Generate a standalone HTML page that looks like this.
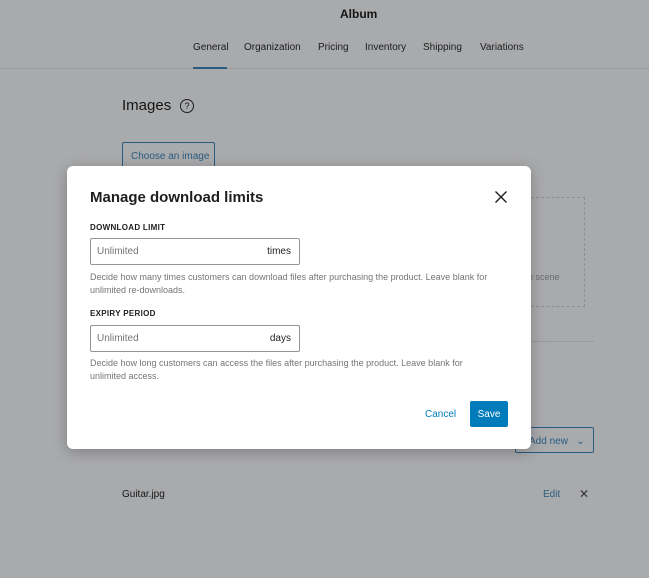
<!DOCTYPE html>
<html><head><style>
*{box-sizing:border-box;margin:0;padding:0}
body{width:649px;height:578px;overflow:hidden;background:#a9aaac;font-family:"Liberation Sans",sans-serif;position:relative;color:#151515}
.a{position:absolute;white-space:nowrap}
.tab{font-size:10px;top:42px;color:#1c1c1c}
.modal{position:absolute;left:67px;top:166px;width:464px;height:283px;background:#fff;border-radius:6px;box-shadow:0 3px 14px rgba(0,0,0,.25)}
.lab{font-size:8px;font-weight:bold;letter-spacing:.3px;color:#1e1e1e}
.inp{position:absolute;width:210px;height:27px;border:1px solid #949494;border-radius:2px;font-size:10px}
.inp .p{position:absolute;left:6px;top:7px;color:#757575}
.inp .s{position:absolute;right:8px;top:7px;color:#1e1e1e}
.help{font-size:9px;color:#757575;line-height:13px;white-space:normal;width:420px}
</style></head><body>
<div class="a" style="left:340px;top:7px;font-size:12px;font-weight:bold">Album</div>
<div class="a tab" style="left:193px">General</div>
<div class="a tab" style="left:244px">Organization</div>
<div class="a tab" style="left:318px">Pricing</div>
<div class="a tab" style="left:365px">Inventory</div>
<div class="a tab" style="left:423px">Shipping</div>
<div class="a tab" style="left:480px">Variations</div>
<div class="a" style="left:0;top:68px;width:649px;height:1px;background:#999a9c"></div>
<div class="a" style="left:193px;top:67px;width:34px;height:2px;background:#2a5c82"></div>
<div class="a" style="left:122px;top:97px;font-size:15px">Images</div>
<div class="a" style="left:180px;top:99px;width:14px;height:14px;border:1.3px solid #1e1e1e;border-radius:50%;font-size:9px;text-align:center;line-height:12px">?</div>
<div class="a" style="left:122px;top:142px;width:93px;height:26px;border:1px solid #2a5c82;border-radius:2px;color:#2a5c82;font-size:10px;padding:8px 0 0 8px">Choose an image</div>
<div class="a" style="left:480px;top:197px;width:105px;height:110px;border:1px dashed #8e8f91"></div>
<div class="a" style="left:528px;top:272px;font-size:9px;color:#6a6b6d">e scene</div>
<div class="a" style="left:500px;top:341px;width:94px;height:1px;background:#98999b"></div>
<div class="a" style="left:515px;top:427px;width:79px;height:26px;border:1px solid #2a5c82;border-radius:2px;color:#2a5c82;font-size:10px;padding:8px 0 0 13px">Add new &nbsp;&nbsp;⌄</div>
<div class="a" style="left:122px;top:489px;font-size:10px">Guitar.jpg</div>
<div class="a" style="left:543px;top:489px;font-size:10px;color:#2a5c82">Edit</div>
<div class="a" style="left:579px;top:487px;font-size:12px;color:#333">✕</div>

<div class="modal">
<div class="a" style="left:23px;top:23px;font-size:15px;font-weight:bold;color:#1e1e1e">Manage download limits</div>
<svg class="a" style="left:427px;top:24px" width="14" height="14" viewBox="0 0 14 14"><path d="M1.5 1.5L12.5 12.5M12.5 1.5L1.5 12.5" stroke="#1e1e1e" stroke-width="1.4"/></svg>
<div class="a lab" style="left:23px;top:57px">DOWNLOAD LIMIT</div>
<div class="inp" style="left:23px;top:72px"><span class="p">Unlimited</span><span class="s">times</span></div>
<div class="a help" style="left:23px;top:105px">Decide how many times customers can download files after purchasing the product. Leave blank for unlimited re-downloads.</div>
<div class="a lab" style="left:23px;top:143px">EXPIRY PERIOD</div>
<div class="inp" style="left:23px;top:159px"><span class="p">Unlimited</span><span class="s">days</span></div>
<div class="a help" style="left:23px;top:191px;width:400px">Decide how long customers can access the files after purchasing the product. Leave blank for unlimited access.</div>
<div class="a" style="left:358px;top:243px;font-size:10px;color:#007cba">Cancel</div>
<div class="a" style="left:403px;top:235px;width:38px;height:26px;background:#007cba;border-radius:2px;color:#fff;font-size:10px;text-align:center;padding-top:8px;line-height:11px">Save</div>
</div>
</body></html>
